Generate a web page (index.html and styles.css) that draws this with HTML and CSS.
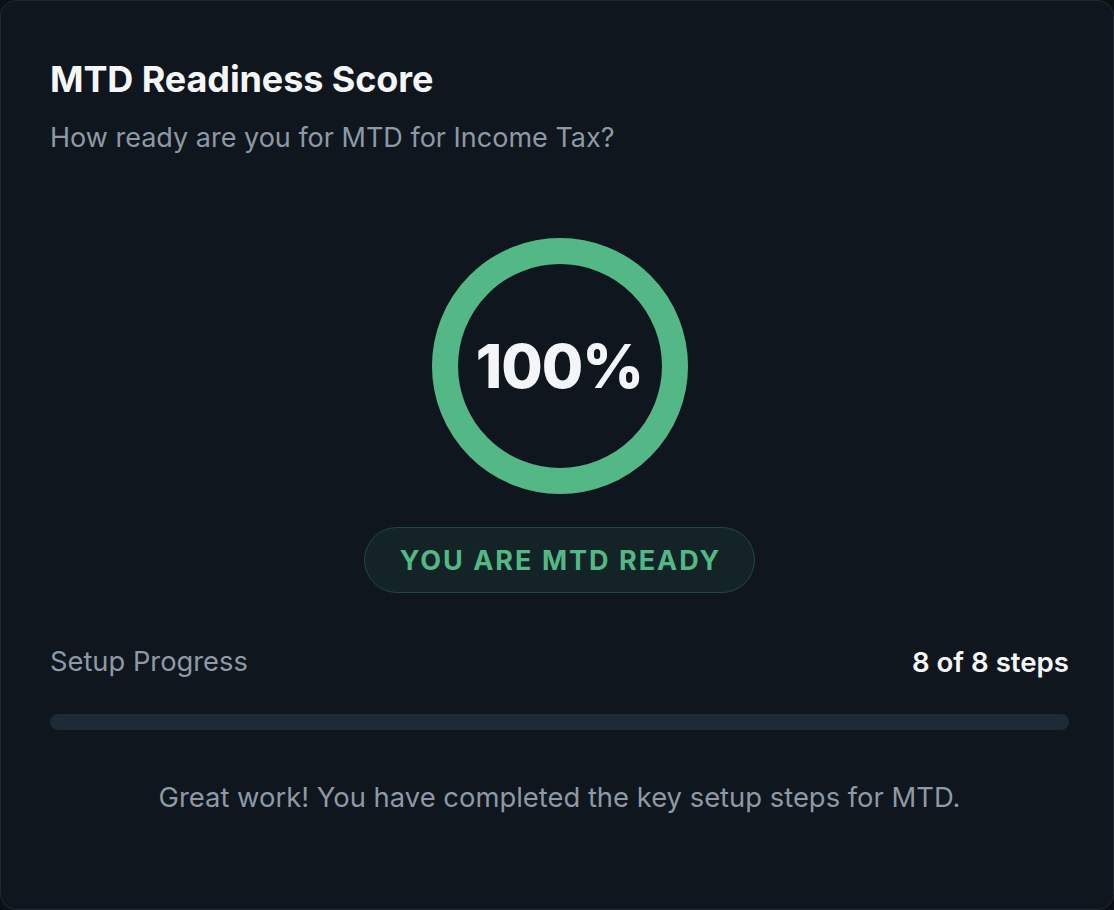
FILE: index.html
```html
<!DOCTYPE html>
<html lang="en">
<head>
  <meta charset="UTF-8">
  <title>MTD Readiness Score</title>
  <link rel="stylesheet" href="styles.css">
</head>
<body>
  <div class="card">
    <!-- header -->
    <h2 class="card-title">MTD Readiness Score</h2>
    <p class="card-subtitle">How ready are you for MTD for Income Tax?</p>

    <!-- score ring -->
    <div class="score">
      <div class="score-ring">
        <svg width="256" height="256" viewBox="0 0 256 256">
          <circle cx="128" cy="128" r="115" fill="none" stroke="#1e2a35" stroke-width="26"/>
          <circle cx="128" cy="128" r="115" fill="none" stroke="#53b886" stroke-width="26"/>
        </svg>
        <span class="score-value">100%</span>
      </div>
      <div class="score-badge">YOU ARE MTD READY</div>
    </div>

    <!-- progress -->
    <div class="progress">
      <div class="progress-head">
        <span class="progress-label">Setup Progress</span>
        <span class="progress-count">8 of 8 steps</span>
      </div>
      <div class="progress-track"></div>
    </div>

    <p class="card-note">Great work! You have completed the key setup steps for MTD.</p>
  </div>
</body>
</html>
```

FILE: styles.css
```css
* {
  margin: 0;
  padding: 0;
  box-sizing: border-box;
}

body {
  width: 1114px;
  height: 910px;
  background: #0b1015;
  overflow: hidden;
  font-family: Inter, 'Noto Sans', sans-serif;
  -webkit-font-smoothing: antialiased;
}

.card {
  width: 1114px;
  height: 910px;
  background: #0f161d;
  border: 1px solid #1f2a35;
  border-radius: 16px;
  padding: 56px 44px 0 49px;
}

.card-title {
  font-size: 36px;
  font-weight: 700;
  color: #f5f6f8;
  letter-spacing: -0.1px;
  line-height: 44px;
}

.card-subtitle {
  margin-top: 19px;
  font-size: 27px;
  color: #8d99a6;
  line-height: 36px;
}

.score {
  display: flex;
  flex-direction: column;
  align-items: center;
  margin-top: 82px;
}

.score-ring {
  position: relative;
  width: 256px;
  height: 256px;
}

.score-ring svg {
  display: block;
}

.score-value {
  position: absolute;
  inset: 0;
  display: flex;
  align-items: center;
  justify-content: center;
  font-size: 60px;
  font-weight: 800;
  color: #f3f5f8;
  letter-spacing: -1px;
}

.score-badge {
  margin-top: 33px;
  height: 66px;
  padding: 0 33px 0 35px;
  display: flex;
  align-items: center;
  border-radius: 33px;
  background: #142326;
  border: 1px solid #1f4a38;
  color: #53b886;
  font-size: 27px;
  font-weight: 700;
  letter-spacing: 2px;
}

.progress {
  margin-top: 51px;
}

.progress-head {
  display: flex;
  justify-content: space-between;
  align-items: center;
  font-size: 27.3px;
  line-height: 36px;
}

.progress-label {
  color: #8d99a6;
}

.progress-count {
  color: #f5f6f8;
  font-weight: 600;
  font-size: 27.6px;
}

.progress-track {
  margin-top: 34px;
  height: 16px;
  border-radius: 8px;
  background: #1e2a35;
}

.card-note {
  margin-top: 49px;
  text-align: center;
  font-size: 27.4px;
  line-height: 36px;
  color: #8d99a6;
}
```
